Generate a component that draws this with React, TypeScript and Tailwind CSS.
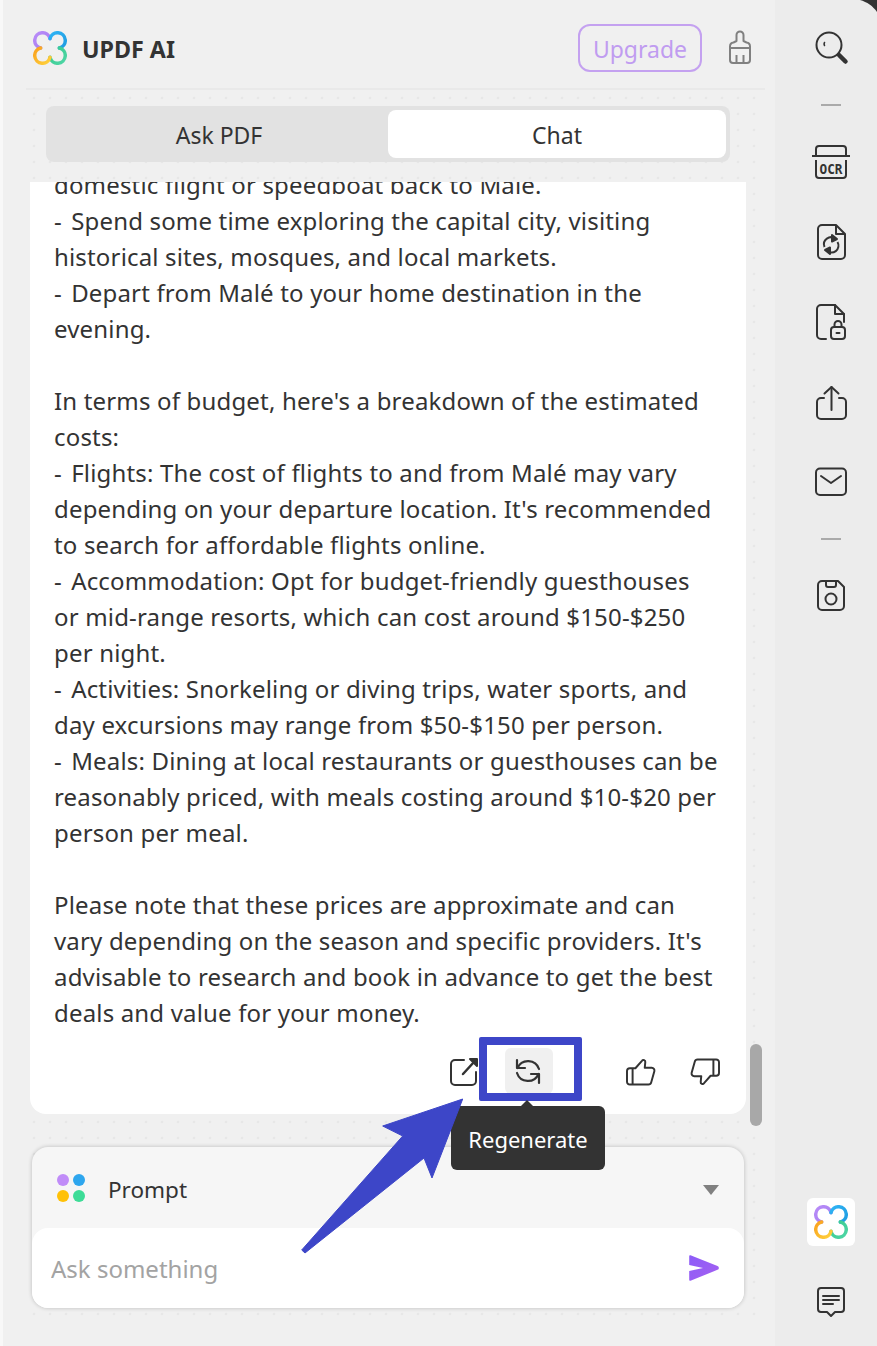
const lines = [
  'domestic flight or speedboat back to Male.',
  '- Spend some time exploring the capital city, visiting',
  'historical sites, mosques, and local markets.',
  '- Depart from Malé to your home destination in the',
  'evening.',
  '',
  "In terms of budget, here's a breakdown of the estimated",
  'costs:',
  '- Flights: The cost of flights to and from Malé may vary',
  "depending on your departure location. It's recommended",
  'to search for affordable flights online.',
  '- Accommodation: Opt for budget-friendly guesthouses',
  'or mid-range resorts, which can cost around $150-$250',
  'per night.',
  '- Activities: Snorkeling or diving trips, water sports, and',
  'day excursions may range from $50-$150 per person.',
  '- Meals: Dining at local restaurants or guesthouses can be',
  'reasonably priced, with meals costing around $10-$20 per',
  'person per meal.',
  '',
  'Please note that these prices are approximate and can',
  "vary depending on the season and specific providers. It's",
  'advisable to research and book in advance to get the best',
  'deals and value for your money.',
]

const thumb =
  'M7 11v18M4 11h6l7-8a2 2 0 0 1 3.6 1.5L20 10.5h7.5a3 3 0 0 1 2.8 3.8l-3.4 12a3 3 0 0 1-2.9 2.2H4a3 3 0 0 1-3-3V14a3 3 0 0 1 3-3z'

function Logo({ size = 34 }: { size?: number }) {
  return (
    <svg width={size} height={size} viewBox="0 0 34 34" fill="none" strokeWidth="3.5" strokeLinecap="round">
      <defs>
        <linearGradient id="lobe-a" x1="0" y1="0" x2="1" y2="1">
          <stop offset="0" stopColor="#b98cf8" />
          <stop offset="1" stopColor="#a37bf0" />
        </linearGradient>
        <linearGradient id="lobe-b" x1="0" y1="0" x2="1" y2="1">
          <stop offset="0" stopColor="#2fb4f5" />
          <stop offset="1" stopColor="#1e9be0" />
        </linearGradient>
        <linearGradient id="lobe-c" x1="0" y1="0" x2="1" y2="1">
          <stop offset="0" stopColor="#35c98c" />
          <stop offset="1" stopColor="#4fd6a6" />
        </linearGradient>
        <linearGradient id="lobe-d" x1="0" y1="0" x2="1" y2="1">
          <stop offset="0" stopColor="#f9a01e" />
          <stop offset="1" stopColor="#ffd23c" />
        </linearGradient>
      </defs>
      <path d="M17 7.6A7.75 7.75 0 1 0 7.6 17" stroke="url(#lobe-a)" />
      <path d="M26.4 17A7.75 7.75 0 1 0 17 7.6" stroke="url(#lobe-b)" />
      <path d="M17 26.4A7.75 7.75 0 1 0 26.4 17" stroke="url(#lobe-c)" />
      <path d="M7.6 17A7.75 7.75 0 1 0 17 26.4" stroke="url(#lobe-d)" />
    </svg>
  )
}

function Dash() {
  return <div className="h-[2px] w-5 bg-[#aaaaaa]" />
}

function Sidebar() {
  const ink = '#333333'
  return (
    <aside className="flex w-[102px] flex-col items-center bg-[#ececec] pl-[9px]">
      <svg className="mt-[29px]" width="36" height="36" viewBox="0 0 36 36" fill="none" stroke={ink}>
        <circle cx="16" cy="16" r="12.5" strokeWidth="2" />
        <path d="M26 26l6.5 6.5" strokeWidth="4.5" strokeLinecap="round" />
        <path d="M11.5 13.5c-.6 1-.6 2 0 3" strokeWidth="1.6" strokeLinecap="round" />
      </svg>
      <div className="mt-[39px]">
        <Dash />
      </div>
      <svg className="mt-[38px]" width="40" height="36" viewBox="0 0 40 36" fill="none" stroke={ink} strokeWidth="2">
        <path d="M1 12h38" />
        <path d="M5 12V5a3 3 0 0 1 3-3h24a3 3 0 0 1 3 3v7" />
        <path d="M5 16v15a3 3 0 0 0 3 3h24a3 3 0 0 0 3-3V16" />
        <text x="20" y="30" textAnchor="middle" fontFamily="'DejaVu Sans Mono', monospace" fontSize="13.5" fontWeight="700" textLength="23" lengthAdjust="spacingAndGlyphs" fill={ink} stroke="none">
          OCR
        </text>
      </svg>
      <svg className="mt-[44px]" width="30" height="36" viewBox="0 0 30 36" fill="none" stroke={ink} strokeWidth="2" strokeLinejoin="round">
        <path d="M20 1H6a4 4 0 0 0-4 4v26a4 4 0 0 0 4 4h19a4 4 0 0 0 4-4V10z" />
        <path d="M20 1v9h9" />
        <path d="M8.5 23a7 7 0 0 1 11-8" />
        <path d="M21.5 18a7 7 0 0 1-11 8.5" />
        <path d="M16 11l5 4-5 2.5z" fill={ink} />
        <path d="M14 30l-5-4 5-2.5z" fill={ink} />
      </svg>
      <svg className="mt-[44px]" width="32" height="36" viewBox="0 0 32 36" fill="none" stroke={ink} strokeWidth="2" strokeLinejoin="round" strokeLinecap="round">
        <path d="M11 35H6a4 4 0 0 1-4-4V5a4 4 0 0 1 4-4h14l9 9v8" />
        <path d="M20 1v9h9" />
        <rect x="16" y="23" width="14" height="12" rx="3" />
        <path d="M19.5 23v-2.5a3.5 3.5 0 0 1 7 0V23" />
        <path d="M21.5 29h3" />
      </svg>
      <svg className="mt-[45px]" width="32" height="36" viewBox="0 0 32 36" fill="none" stroke={ink} strokeWidth="2" strokeLinecap="round" strokeLinejoin="round">
        <path d="M9 13H6a4 4 0 0 0-4 4v13a4 4 0 0 0 4 4h21a4 4 0 0 0 4-4V17a4 4 0 0 0-4-4h-3" />
        <path d="M16.5 25V2" />
        <path d="M9.5 8.5l7-6.5 7 6.5" />
      </svg>
      <svg className="mt-[46px]" width="34" height="30" viewBox="0 0 34 30" fill="none" stroke={ink} strokeWidth="2" strokeLinecap="round" strokeLinejoin="round">
        <rect x="2" y="1.5" width="30" height="26.5" rx="4" />
        <path d="M7 9l10 7 10-7" />
      </svg>
      <div className="mt-[41px]">
        <Dash />
      </div>
      <svg className="mt-[39px]" width="30" height="32" viewBox="0 0 30 32" fill="none" stroke={ink} strokeWidth="2" strokeLinejoin="round">
        <path d="M6 2h16l6 6v19a4 4 0 0 1-4 4H6a4 4 0 0 1-4-4V6a4 4 0 0 1 4-4z" />
        <path d="M10 2v4a2 2 0 0 0 2 2h6a2 2 0 0 0 2-2V2" />
        <circle cx="15" cy="20" r="5.5" />
      </svg>
      <div className="mt-[587px] flex h-12 w-12 items-center justify-center rounded-md bg-white">
        <Logo />
      </div>
      <svg className="mt-[40px]" width="30" height="32" viewBox="0 0 30 32" fill="none" stroke={ink} strokeWidth="2" strokeLinejoin="round" strokeLinecap="round">
        <path d="M5 2h20a3 3 0 0 1 3 3v18a3 3 0 0 1-3 3h-6l-4 4-4-4H5a3 3 0 0 1-3-3V5a3 3 0 0 1 3-3z" />
        <path d="M7 10h16M7 14h16M7 18h10" />
      </svg>
    </aside>
  )
}

function ChatCard() {
  return (
    <div className="ml-[4px] mt-[20px] flex h-[932px] w-[716px] flex-col rounded-b-2xl bg-white">
      <div className="h-[866px] overflow-hidden px-6">
        <div className="-mt-[15px] text-[24px] leading-[36px] tracking-[0.17px] text-[#333333]">
          {lines.map((line, i) => (
            <div key={i} className="h-9 whitespace-nowrap">
              {line.startsWith('- ') ? (
                <>
                  <span className="tracking-[3px]">-</span>
                  {line.slice(1)}
                </>
              ) : (
                line
              )}
            </div>
          ))}
        </div>
      </div>
      <div className="flex justify-end gap-4 pr-[17px]">
        <button className="flex h-[46px] w-12 items-center justify-center">
          <svg className="mr-[3px]" width="30" height="30" viewBox="0 0 30 30" fill="none" stroke="#333333" strokeWidth="2" strokeLinecap="round" strokeLinejoin="round">
            <path d="M15 4H6a4 4 0 0 0-4 4v17a4 4 0 0 0 4 4h17a4 4 0 0 0 4-4V16" />
            <path d="M14 18L25 6" strokeWidth="2.5" />
            <path d="M21 3h7v7z" fill="#333333" />
          </svg>
        </button>
        <button className="flex h-[46px] w-12 items-center justify-center rounded-md bg-[#f0f0f0]">
          <svg className="mr-[3px]" width="28" height="28" viewBox="0 0 28 28" fill="none" stroke="#333333" strokeWidth="2.2" strokeLinecap="round" strokeLinejoin="round">
            <path d="M3.5 11A11.5 11.5 0 0 1 25 12" />
            <path d="M3 3v8h8" />
            <path d="M24.5 17A11.5 11.5 0 0 1 3 16" />
            <path d="M25 26v-9h-8" />
          </svg>
        </button>
        <div className="w-8" />
        <button className="flex h-[46px] w-12 items-center justify-center">
          <svg className="mt-[1px]" width="30" height="28" viewBox="0 0 32 30" fill="none" stroke="#333333" strokeWidth="2.1" strokeLinejoin="round">
            <path d={thumb} />
          </svg>
        </button>
        <button className="flex h-[46px] w-12 items-center justify-center">
          <svg className="mt-[1px]" width="30" height="28" viewBox="0 0 32 30" fill="none" stroke="#333333" strokeWidth="2.1" strokeLinejoin="round">
            <path d={thumb} transform="rotate(180 16 15)" />
          </svg>
        </button>
      </div>
    </div>
  )
}

function PromptBox() {
  return (
    <div className="ml-[6px] mt-[33px] h-[161px] w-[712px] rounded-2xl bg-[#f6f6f6] shadow-[0_0_4px_rgba(0,0,0,0.22)]">
      <div className="flex h-[81px] items-center px-[25px]">
        <div className="grid grid-cols-2 gap-1">
          <span className="h-3 w-3 rounded-full bg-[#c08cf8]" />
          <span className="h-3 w-3 rounded-full bg-[#2ea6ee]" />
          <span className="h-3 w-3 rounded-full bg-[#ffc107]" />
          <span className="h-3 w-3 rounded-full bg-[#3ddc97]" />
        </div>
        <span className="ml-[23px] mt-[4px] text-[22.5px] text-[#333333]">Prompt</span>
        <div className="ml-auto mt-[4px] h-0 w-0 border-x-[8px] border-t-[10px] border-x-transparent border-t-[#808080]" />
      </div>
      <div className="flex h-[80px] items-center rounded-2xl bg-white pl-[19px] pr-[25px]">
        <input
          placeholder="Ask something"
          className="flex-1 bg-transparent pt-[2px] text-[24px] outline-none placeholder:text-[#a3a3a3]"
        />
        <svg width="30" height="26" viewBox="0 0 30 26">
          <defs>
            <linearGradient id="send" x1="0" y1="0" x2="1" y2="1">
              <stop offset="0" stopColor="#8c5cf8" />
              <stop offset="1" stopColor="#a560f0" />
            </linearGradient>
          </defs>
          <path d="M1.5 0.3L28.5 11a2 2 0 0 1 0 3.8L1.5 25.7a1 1 0 0 1-1.3-1V16L14 13 .2 10V1.3a1 1 0 0 1 1.3-1z" fill="url(#send)" />
        </svg>
      </div>
    </div>
  )
}

export default function App() {
  return (
    <div
      className="relative flex h-[1346px] w-[877px] overflow-hidden bg-[#f0f0f0] text-[#333333]"
      style={{ fontFamily: "'Noto Sans', 'Open Sans', sans-serif" }}
    >
      <div className="w-[775px] border-l-[3px] border-l-[#f8f8f8]">
        <header className="ml-[23px] mr-[10px] flex h-[90px] items-center border-b-2 border-b-[#e9e9e9] pl-[7px] pt-[8px]">
          <div className="flex items-center">
            <Logo />
            <span className="ml-[15px] mt-[2px] text-[23.25px] font-bold">UPDF AI</span>
          </div>
          <div className="ml-auto flex items-center">
            <button className="flex h-12 w-[124px] items-center justify-center rounded-xl border-2 border-[#c4a1f0] pt-[3px] text-[23px] text-[#c09cf0]">
              Upgrade
            </button>
            <svg className="-mt-[3px] ml-[26px] mr-[13px]" width="24" height="34" viewBox="0 0 24 34" fill="none" stroke="#808080" strokeWidth="2" strokeLinejoin="round">
              <path d="M8.5 11V5a3.5 3.5 0 0 1 7 0v6l3 1.5a4 4 0 0 1 3.5 4V18H2v-1.500a4 4 0 0 1 3.500-4z" />
              <path d="M2 18v12a3 3 0 0 0 3 3h14a3 3 0 0 0 3-3V18" />
              <path d="M8.500 33v-8M15.500 33v-8" />
            </svg>
          </div>
        </header>
        <div className="ml-[23px] mr-[10px] h-[1230px] bg-[radial-gradient(circle,#e7e7e7_1.5px,transparent_1.6px)] bg-[length:16px_16px] pt-[16px]">
          <div className="ml-[20px] flex h-14 w-[684px] rounded-lg bg-[#e2e2e2] p-1">
            <div className="flex w-[338px] items-center justify-center pt-[2px] text-[23px]">Ask PDF</div>
            <div className="flex w-[338px] items-center justify-center rounded-lg bg-white pt-[2px] text-[23px]">Chat</div>
          </div>
          <ChatCard />
          <PromptBox />
        </div>
      </div>
      <Sidebar />

      {/* scrollbar + screenshot annotations sit over the panel */}
      <div className="absolute left-[750px] top-[1044px] h-[82px] w-[12px] rounded-md bg-[#a8a8a8]" />
      <div className="absolute left-[479px] top-[1037px] h-[64px] w-[103px] rounded-[2px] border-[8px] border-[#3d46c8]" />
      <div className="absolute left-[521px] top-[1100px] h-0 w-0 border-x-[6px] border-b-[6px] border-x-transparent border-b-[#333333]" />
      <div className="absolute left-[451px] top-[1106px] flex h-16 w-[154px] items-center justify-center rounded-md bg-[#333333] pt-[2px] text-[22px] text-white">
        Regenerate
      </div>
      <svg className="absolute left-0 top-0" width="877" height="1346" viewBox="0 0 877 1346">
        <path d="M462.7 1099L382.700 1126L402.700 1136L301.700 1250L305 1253L424 1158L432 1178Z" fill="#3d46c8" stroke="#3d46c8" strokeLinejoin="round" />
        <path d="M860 0H877V12C873 6 867 2 860 0Z" fill="#333333" />
      </svg>
    </div>
  )
}
